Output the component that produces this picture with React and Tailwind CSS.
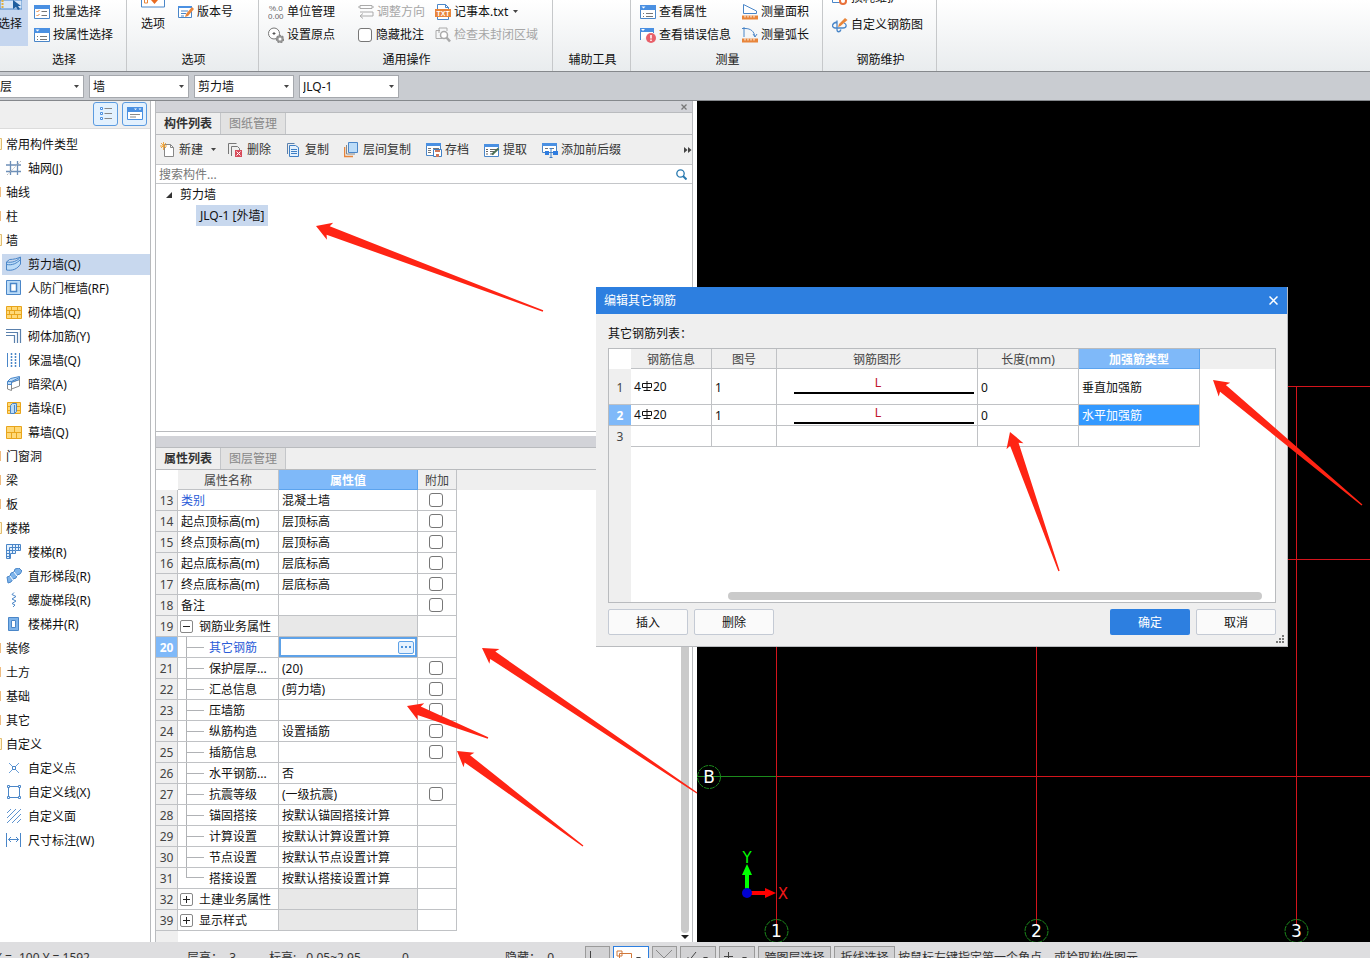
import React from 'react';

// ─── Icons (16x16) ─────────────────────────────────────────────────
const B = '#4a86c8';
const L = '#bcdcf8';
const O = '#e8853a';

const ICONS = {
  batch: (
    <>
      <path d="M.5 1.5h15v13H.5z" fill="#fff" stroke={B} />
      <path d="M0 1h16v4H0z" fill="#4a90e2" />
      <path d="M2.5 7l1 1 2-2M2.5 11l1 1 2-2" fill="none" stroke={O} />
      <path d="M7.5 7.5H13M7.5 11.5H13" stroke="#777" />
    </>
  ),
  props: (
    <>
      <path d="M.5 1.5h15v13H.5z" fill="#fff" stroke={B} />
      <path d="M0 1h16v5H0z" fill="#4a90e2" />
      <path d="M1.500 2.500h4L3.500 4.500z" fill="#fff" />
      <path d="M3 9.500h1M6 9.500h7M3 12.500h1M6 12.500h7" stroke="#777" />
    </>
  ),
  version: (
    <>
      <path d="M.5 2.500h13v11H.5z" fill="#fff" stroke={B} />
      <path d="M0 2h14v2H0z" fill="#4a90e2" />
      <path d="M3 7h7M3 9.500h5M3 12h3" stroke={B} />
      <path d="M7 13l1-3 6-7 2 2-6 7z" fill={O} />
    </>
  ),
  unit: (
    <g fontSize="8" fill="#666" fontFamily="Liberation Sans">
      <text x="1" y="7">%.0</text>
      <text x="0" y="15">0.00</text>
    </g>
  ),
  origin: (
    <>
      <circle cx="6" cy="6.500" r="5.500" fill="#fff" stroke="#777" />
      <path d="M4.500 6.500h3M6 5v3" stroke="#555" />
      <circle cx="12" cy="12" r="3.500" fill="#999" stroke="#888" strokeWidth="1.500" strokeDasharray="2 1" />
      <circle cx="12" cy="12" r="1.500" fill="#fff" />
    </>
  ),
  direction: (
    <path d="M2 1.500h12v3H2zM2 3H0M14 3h2M2 8h13v4H3M5 9.500L2 12l3 2.500" fill="none" stroke="#aaa" />
  ),
  txt: (
    <>
      <path d="M2.500.5h8l3 3v12h-11z" fill="#fff" stroke={B} />
      <path d="M10.500.5v3h3" fill="none" stroke={B} />
      <path d="M0 5h16v8H0z" fill={O} />
      <text x="1.500" y="11.500" fontSize="7" fontWeight="bold" fill="#fff" fontFamily="Liberation Sans">TXT</text>
    </>
  ),
  region: (
    <>
      <path d="M4 3.500V1h8v3M7 11.500H1V3.500h4M4 6V4" fill="none" stroke="#aaa" />
      <circle cx="9" cy="8" r="3.500" fill="#fff" stroke="#aaa" strokeWidth="1.500" />
      <path d="M11.500 10.500l3.500 4" stroke="#aaa" strokeWidth="2.500" />
    </>
  ),
  viewError: (
    <>
      <path d="M.5 13V1.500h13V6" fill="#fff" stroke={B} />
      <path d="M0 1h14v4H0z" fill="#4a90e2" />
      <path d="M1 2h4L3 4z" fill="#fff" />
      <circle cx="11" cy="11" r="5" fill="#e8606a" />
      <path d="M11 8v3.500M11 12.500V14" stroke="#fff" strokeWidth="1.500" />
    </>
  ),
  area: (
    <>
      <path d="M1.500.5v9h13V7z" fill="#fff" stroke={B} />
      <path d="M0 11.500h16v4H0z" fill={O} />
      <path d="M3 11.500v2M6 11.500v2M9 11.500v2M12 11.500v2" stroke="#fff" />
    </>
  ),
  arc: (
    <>
      <path d="M0 1.500h4M2 0v10M3 1.500c6 0 9 3 10 8M11 7l2 3 2-3" fill="none" stroke={B} />
      <path d="M0 11.500h16v4H0z" fill={O} />
      <path d="M3 11.500v2M6 11.500v2M9 11.500v2M12 11.500v2" stroke="#fff" />
    </>
  ),
  custom: (
    <>
      <path d="M5 5c-5 1-6 5-2 6h8c4 0 4-4 1-5M5 3.500v9c0 3 3 3 4 0" fill="none" stroke={B} strokeWidth="1.300" />
      <path d="M6 10l1-3 6-6 2.500 2-7 6z" fill={O} />
    </>
  ),
  loss: (
    <>
      <path d="M.5 1.500h11v11H.5z" fill="#fff" stroke={B} />
      <circle cx="11" cy="11" r="3" fill="#fff" stroke="#e8703a" strokeWidth="2" />
    </>
  ),
  grid: (
    <>
      <path d="M4.500 1v14M11.500 1v14M0 5h15M0 11.500h15" stroke="#6d8fb8" strokeWidth="1.300" />
      <path d="M1 15L15 1" stroke="#bbb" strokeDasharray="2 1" />
    </>
  ),
  shear: (
    <>
      <path d="M.5 6c6 1 11-1 14-5v7c-3 5-8 7-14 6z" fill={L} stroke={B} />
      <path d="M.5 8.500c6 1 10-1 14-5M.5 6l3-2.500c4 0 8-1 11-2.500" fill="none" stroke={B} />
    </>
  ),
  frame: (
    <>
      <path d="M.5.5h14v14H.5z" fill={L} stroke={B} />
      <path d="M4.500 3.500h6v8h-6z" fill="#fff" stroke={B} strokeWidth="1.500" />
    </>
  ),
  brick: (
    <>
      <path d="M.5 2.500h15v12H.5z" fill="#ffd978" stroke="#e8a51c" />
      <path d="M0 6.500h16M0 10.500h16M5.500 2v4M11.500 2v4M3.500 7v3M8.500 7v3M5.500 11v3M11.500 11v3" stroke="#e8a51c" />
    </>
  ),
  rebar: <path d="M0 1.500h14.500V15M0 4.500h11.500V15M0 7.500h8.500V15" fill="none" stroke="#5a80ac" strokeWidth="1.200" />,
  insul: (
    <>
      <path d="M1.500 1v14M13.500 1v14" stroke={B} />
      <path d="M5.500 1v14M9.500 1v14" stroke={B} strokeWidth="1.500" strokeDasharray="2 1" />
    </>
  ),
  beam: (
    <>
      <path d="M1.500 6.500h4v8l-4-1.500zM5.500 6.500l8-3v6.500l-8 3" fill="#fff" stroke="#888" />
      <path d="M1.500 5.500l3-3 9-2v3l-8 2.500v2.500h-4z" fill={L} stroke={B} />
      <path d="M1.500 5.500h4l8-4M5.500 5.500v3" fill="none" stroke={B} />
    </>
  ),
  pier: (
    <>
      <path d="M1.500 2.500h13v11h-13z" fill="#ffd978" stroke="#e8a51c" />
      <path d="M1 6.500h14M1 10.500h14" stroke="#e8a51c" />
      <path d="M4.500 5.500l2-2h4v8l-2 2h-4z" fill={L} stroke={B} />
      <path d="M8.500 5v8" stroke={B} />
    </>
  ),
  curtain: (
    <>
      <path d="M.5 2.500h15v12H.5z" fill="#ffd978" stroke="#e8a51c" />
      <path d="M0 8.500h16M8.500 2v6M5.500 9v5M10.500 9v5" stroke="#e8a51c" />
    </>
  ),
  stair: (
    <>
      <path d="M.5.5h14v6h-5v3h-5v5h-4z" fill="#e4f1fd" stroke={B} />
      <path d="M3.500 3.500h11M3.500 3.500v11M6.500 1v8M9.500 1v5M12.500 1v5M1 6.500h8M1 9.500h3M1 12.500h3" fill="none" stroke={B} />
    </>
  ),
  flight: (
    <>
      <path d="M1 9l3-1 1-3 3-1 1-3 4-1 3 3-2 3-3 1-1 3-3 1-2 3-3 1z" fill="#7db3ea" stroke={B} />
      <path d="M4 8l3 4M8 4l3 4" stroke="#fff" />
    </>
  ),
  spiral: <path d="M8 .5L6 2.500l4 2-4 2.500 4 2-4 2.500 3 1.500-2 2" fill="none" stroke={B} />,
  well: (
    <>
      <path d="M2.500 1.500h10v13h-10z" fill="#7db3ea" stroke={B} />
      <path d="M5.500 4.500h4v7h-4z" fill="#fff" stroke={B} />
    </>
  ),
  point: (
    <>
      <path d="M3 3l10 10M13 3L3 13" stroke="#6a9fd8" />
      <path d="M6.500 6.500h3v3h-3z" fill="#fff" stroke={B} />
    </>
  ),
  line: (
    <>
      <path d="M2.500 2.500h11v11h-11z" fill="none" stroke={B} />
      <path d="M1.500 1.500h2v2h-2zM12.500 1.500h2v2h-2zM1.500 12.500h2v2h-2zM12.500 12.500h2v2h-2z" fill="#fff" stroke={B} />
    </>
  ),
  face: <path d="M1 5l4-4M1 10l9-9M1 15L15 1M6 15l9-9M11 15l4-4" stroke={B} strokeWidth=".9" />,
  dimension: <path d="M.5 1v14M14.500 1v14M2.500 7.500h10M5 5L2.500 7.500 5 10M10 5l2.500 2.500L10 10" fill="none" stroke={B} />,
  create: (
    <>
      <path d="M4.500 2.500h6l3 3v9h-9z" fill="#fff" stroke="#888" />
      <path d="M10.500 2.500v3h3" fill="none" stroke="#888" />
      <path d="M3.500 0v8M0 4h7M1 1l5 5M6 1L1 6" stroke="#f0a030" strokeWidth=".9" />
    </>
  ),
  remove: (
    <>
      <path d="M.5 12V1.500h8M3.500 14V4.500h6l2 2V9" fill="none" stroke="#777" />
      <path d="M7 8h7v7H7z" fill="#d84a5a" />
      <path d="M8.500 9.500l4 4M12.500 9.500l-4 4" stroke="#fff" />
    </>
  ),
  copy: (
    <>
      <path d="M1.500 12V1.500h7" fill="none" stroke="#5a80ac" />
      <path d="M3.500 3.500h6l3 2v9h-9z" fill="#e4f1fd" stroke="#3f7fc4" />
      <path d="M5 7.500h6M5 9.500h6M5 11.500h6" stroke="#3f7fc4" />
    </>
  ),
  layerCopy: (
    <>
      <path d="M.5 5v9.500H9" fill="none" stroke={O} strokeWidth="1.500" />
      <path d="M2.500 3v9H11" fill="none" stroke="#888" />
      <path d="M4.500.5h9v10h-9z" fill={L} stroke={B} />
    </>
  ),
  archive: (
    <>
      <path d="M.5 1.500h14v12H.5z" fill="#fff" stroke={B} />
      <path d="M0 1h15v3H0z" fill="#4a90e2" />
      <path d="M2 6.500h3M7 6.500h6M2 8.500h3M2 10.500h3" stroke="#777" />
      <path d="M7.500 7.500h8v7h-8z" fill="#fff" stroke="#3f7fc4" />
      <path d="M9 8h5v2H9zM10 12h3v3h-3z" fill="#d0785a" />
    </>
  ),
  extract: (
    <>
      <path d="M.5 2.500h14v12H.5z" fill="#fff" stroke={B} />
      <path d="M0 2h15v3H0z" fill="#4a90e2" />
      <path d="M2 7.500h2M6 7.500h7M2 9.500h2M6 9.500h4M2 12h2M6 12h4" stroke="#666" />
      <path d="M8 12.500l6.500-6" stroke="#4b7054" strokeWidth="2" />
    </>
  ),
  affix: (
    <>
      <path d="M.5 1.500h14v9H.5z" fill="#fff" stroke={B} />
      <path d="M0 1h15v3H0z" fill="#4a90e2" />
      <path d="M3 6.500h3M8 6.500h4" stroke="#777" />
      <path d="M3 9h4v4H3zM11 9h5v4h-5z" fill="#2f7de0" />
      <path d="M9 7v8M7.500 15.500h3M7.500 6.500h3" stroke="#3f7fc4" />
    </>
  ),
  list: (
    <>
      <path d="M2.500 1.500h2v2h-2zM2.500 6.500h2v2h-2zM2.500 11.500h2v2h-2z" fill="#fff" stroke="#4a90e2" />
      <path d="M6.500 2.500H14M6.500 7.500H14M6.500 12.500H14" stroke="#888" />
    </>
  ),
  panel: (
    <>
      <path d="M.5 1.500h15v12H.5z" fill="#fff" stroke="#4a90e2" />
      <path d="M0 1h16v5H0z" fill="#4a90e2" />
      <path d="M7 2.500h3L8.500 4zM11.500 2.500h3L13 4z" fill="#fff" />
      <path d="M3 8.500h10M3 11h6" stroke="#888" />
    </>
  ),
};

const Icon = ({ name }) => (
  <svg width="16" height="16" viewBox="0 0 16 16" className="shrink-0" aria-hidden="true">
    {ICONS[name]}
  </svg>
);

const Caret = () => (
  <svg width="5" height="3" viewBox="0 0 5 3" className="shrink-0" aria-hidden="true">
    <path d="M0 0h5L2.500 3z" fill="#444" />
  </svg>
);

// ─── Ribbon ────────────────────────────────────────────────────────
const RibbonItem = ({ icon, label, disabled, caret }) => (
  <button
    type="button"
    disabled={disabled}
    className="flex h-[23px] shrink-0 items-center gap-[3px] whitespace-nowrap disabled:text-[#a6a6a6]"
  >
    <Icon name={icon} />
    {label}
    {caret && (
      <span className="pl-[2px]">
        <Caret />
      </span>
    )}
  </button>
);

const RibbonGroup = ({ title, width, children }) => (
  <section className={`flex h-full shrink-0 flex-col border-r border-[#c6c8ca] ${width}`}>
    <div className="flex h-12 shrink-0 items-start">{children}</div>
    <h2 className="flex h-6 shrink-0 items-center justify-center pl-[2px]">{title}</h2>
  </section>
);

const Ribbon = () => (
  <header className="flex h-[72px] shrink-0 overflow-hidden border-b border-[#85888c] bg-linear-to-b from-white to-[#e9ecee]">
    <RibbonGroup title="选择" width="w-[127px]">
      <button type="button" className="flex h-[46px] w-7 shrink-0 flex-col items-end bg-[#c5d6ef] pr-[6px]">
        <svg width="22" height="16" viewBox="0 0 22 16" className="shrink-0" aria-hidden="true">
          <path d="M0 0h22v9H0z" fill="#d5e5f7" stroke={B} />
          <path d="M2.500 0v9" stroke="#e0b040" strokeWidth="2" strokeDasharray="2 1" />
          <path d="M13 0v9l3-2 2 3 2-1-2-3h3z" fill="#1f5f9f" />
        </svg>
        <span className="whitespace-nowrap">选择</span>
      </button>
      <div className="ml-[6px]">
        <RibbonItem icon="batch" label="批量选择" />
        <RibbonItem icon="props" label="按属性选择" />
      </div>
    </RibbonGroup>

    <RibbonGroup title="选项" width="w-[132px]">
      <button type="button" className="ml-[14px] flex flex-col items-center">
        <svg width="24" height="16" viewBox="0 0 24 16" aria-hidden="true">
          <path d="M.5-4v11h23V-4" fill="#fff" stroke={B} />
          <path d="M3.500 0v3h3V0" fill="none" stroke={O} />
          <path d="M10 0h7l-3.500 4z" fill="#e86a20" />
        </svg>
        选项
      </button>
      <div className="ml-[13px]">
        <RibbonItem icon="version" label="版本号" />
      </div>
    </RibbonGroup>

    <RibbonGroup title="通用操作" width="w-[294px]">
      <div className="ml-[9px]">
        <RibbonItem icon="unit" label="单位管理" />
        <RibbonItem icon="origin" label="设置原点" />
      </div>
      <div className="ml-[23px]">
        <RibbonItem icon="direction" label="调整方向" disabled />
        <label className="flex h-[23px] items-center gap-1">
          <input type="checkbox" className="size-[14px] appearance-none rounded-[3px] border border-[#777] bg-white" />
          隐藏批注
        </label>
      </div>
      <div className="ml-[10px]">
        <RibbonItem icon="txt" label="记事本.txt" caret />
        <RibbonItem icon="region" label="检查未封闭区域" disabled />
      </div>
    </RibbonGroup>

    <RibbonGroup title="辅助工具" width="w-[78px]" />

    <RibbonGroup title="测量" width="w-[192px]">
      <div className="ml-[9px]">
        <RibbonItem icon="props" label="查看属性" />
        <RibbonItem icon="viewError" label="查看错误信息" />
      </div>
      <div className="ml-[11px]">
        <RibbonItem icon="area" label="测量面积" />
        <RibbonItem icon="arc" label="测量弧长" />
      </div>
    </RibbonGroup>

    <RibbonGroup title="钢筋维护" width="w-[114px]">
      <div className="ml-[9px] flex h-9 flex-col justify-end gap-1">
        <RibbonItem icon="loss" label="损耗维护" />
        <RibbonItem icon="custom" label="自定义钢筋图" />
      </div>
    </RibbonGroup>
  </header>
);

// ─── Selector bar ──────────────────────────────────────────────────
const SELECTS = [
  { label: '楼层', value: '首层' },
  { label: '构件分类', value: '墙' },
  { label: '构件类型', value: '剪力墙' },
  { label: '构件', value: 'JLQ-1' },
];

const SelectorBar = () => (
  <div className="flex h-[29px] shrink-0 items-center overflow-hidden border-b border-[#85888c] bg-[#c9ccd1]">
    <div className="-ml-4 flex gap-[5px]">
      {SELECTS.map((s) => (
        <div key={s.label} className="relative">
          <select aria-label={s.label} className="h-[23px] w-[100px] appearance-none border border-[#a5a8ad] bg-white px-[3px] pt-px">
            <option>{s.value}</option>
          </select>
          <span className="pointer-events-none absolute inset-y-0 right-[5px] flex items-center">
            <Caret />
          </span>
        </div>
      ))}
    </div>
  </div>
);

// ─── Sidebar ───────────────────────────────────────────────────────
const NAV = [
  { label: '常用构件类型', open: true, items: [['grid', '轴网(J)']] },
  { label: '轴线' },
  { label: '柱' },
  {
    label: '墙',
    open: true,
    items: [
      ['shear', '剪力墙(Q)'],
      ['frame', '人防门框墙(RF)'],
      ['brick', '砌体墙(Q)'],
      ['rebar', '砌体加筋(Y)'],
      ['insul', '保温墙(Q)'],
      ['beam', '暗梁(A)'],
      ['pier', '墙垛(E)'],
      ['curtain', '幕墙(Q)'],
    ],
  },
  { label: '门窗洞' },
  { label: '梁' },
  { label: '板' },
  {
    label: '楼梯',
    open: true,
    items: [
      ['stair', '楼梯(R)'],
      ['flight', '直形梯段(R)'],
      ['spiral', '螺旋梯段(R)'],
      ['well', '楼梯井(R)'],
    ],
  },
  { label: '装修' },
  { label: '土方' },
  { label: '基础' },
  { label: '其它' },
  {
    label: '自定义',
    open: true,
    items: [
      ['point', '自定义点'],
      ['line', '自定义线(X)'],
      ['face', '自定义面'],
      ['dimension', '尺寸标注(W)'],
    ],
  },
];

const Sidebar = () => (
  <nav className="flex w-[151px] shrink-0 flex-col border-r border-[#b8babd] bg-white">
    <div className="flex h-7 shrink-0 items-start justify-end gap-1 border-b border-[#dcdcdc] bg-[#efefef] pt-px pr-[3px]">
      {['list', 'panel'].map((name) => (
        <button
          key={name}
          type="button"
          aria-label={name}
          className="flex h-6 w-[25px] items-center justify-center rounded-[3px] border border-[#5b9be0] bg-[#e3f1fe]"
        >
          <Icon name={name} />
        </button>
      ))}
    </div>
    <ul className="pt-[3px]">
      {NAV.map((group) => (
        <li key={group.label}>
          <button type="button" className="flex h-6 w-full items-center">
            <svg width="6" height="12" viewBox="0 0 6 12" className="shrink-0" aria-hidden="true">
              {group.open ? (
                <path d="M0 .5h1.500v11H0" fill="#fff3d0" stroke="#e0bc70" />
              ) : (
                <path d="M0 1h1v10H0z" fill="#eebb80" />
              )}
            </svg>
            <span className="pt-[2px]">{group.label}</span>
          </button>
          {group.items && (
            <ul>
              {group.items.map(([icon, label]) => (
                <li key={label} className="flex h-6 items-center pl-[2px]">
                  <button
                    type="button"
                    className={`flex h-[21px] w-full items-center gap-[6px] pl-1 ${label === '剪力墙(Q)' ? 'bg-[#c8d8ee]' : ''}`}
                  >
                    <Icon name={icon} />
                    <span className="pt-[2px]">{label}</span>
                  </button>
                </li>
              ))}
            </ul>
          )}
        </li>
      ))}
    </ul>
  </nav>
);

// ─── Dock panels ───────────────────────────────────────────────────
const DockTabs = ({ tabs }) => (
  <div className="flex h-[22px] shrink-0 border-b border-[#b9bbbe] bg-[#efefef]">
    {tabs.map((tab, i) => (
      <button
        key={tab}
        type="button"
        className={`w-[65px] border-r border-[#c4c6c9] ${i === 0 ? 'font-bold text-[#333]' : 'bg-[#e2e2e2] text-[#888]'}`}
      >
        {tab}
      </button>
    ))}
  </div>
);

const TOOLS = [
  ['remove', '删除'],
  ['copy', '复制'],
  ['layerCopy', '层间复制'],
  ['archive', '存档'],
  ['extract', '提取'],
  ['affix', '添加前后缀'],
];

const ComponentPanel = () => (
  <section className="flex shrink-0 flex-col">
    <div className="flex h-3 items-center justify-end border-b border-[#b9bbbe] bg-[#d2d3d8] pr-[5px]">
      <button type="button" aria-label="关闭">
        <svg width="6" height="6" viewBox="0 0 6 6">
          <path d="M.5.5l5 5M5.500.5l-5 5" stroke="#777" strokeWidth="1.300" />
        </svg>
      </button>
    </div>
    <DockTabs tabs={['构件列表', '图纸管理']} />
    <div className="flex h-[30px] items-center border-b border-[#c4c6c9] bg-[#efefef] pl-1 text-[#333]">
      <button type="button" className="flex items-center gap-[3px]">
        <Icon name="create" />
        新建
        <span className="pl-[5px]">
          <Caret />
        </span>
      </button>
      <div className="ml-3 flex gap-[15px]">
        {TOOLS.map(([icon, label]) => (
          <button key={label} type="button" className="flex items-center gap-[3px]">
            <Icon name={icon} />
            {label}
          </button>
        ))}
      </div>
      <button type="button" aria-label="更多" className="ml-auto">
        <svg width="8" height="6" viewBox="0 0 8 6">
          <path d="M0 0l3.500 3L0 6zM4 0l3.500 3L4 6z" fill="#444" />
        </svg>
      </button>
    </div>
    <div className="flex h-[19px] items-center border-b border-[#c4c6c9] bg-white pr-[5px] pl-[3px]">
      <input type="text" aria-label="搜索构件" placeholder="搜索构件..." className="min-w-0 flex-1 pt-[2px] outline-none placeholder:text-[#777]" />
      <svg width="11" height="11" viewBox="0 0 11 11" aria-hidden="true">
        <circle cx="4.500" cy="4.500" r="3.700" fill="none" stroke="#2a7ab0" strokeWidth="1.300" />
        <path d="M7 7l3.500 3.500" stroke="#2a7ab0" strokeWidth="2" />
      </svg>
    </div>
    <div className="h-[248px] border-b border-[#b9bbbe] bg-white">
      <div className="flex h-[21px] items-center gap-2 pl-[10px]">
        <svg width="6" height="6" viewBox="0 0 6 6" aria-hidden="true">
          <path d="M6 0v6H0z" fill="#333" />
        </svg>
        剪力墙
      </div>
      <button type="button" className="ml-10 flex h-[21px] items-center bg-[#c8d8ee] px-1">
        JLQ-1 [外墙]
      </button>
    </div>
  </section>
);

// kind: 'group' = section row with a toggle, 'child' = row hanging on the tree line
const ROWS = [
  { no: 13, name: '类别', value: '混凝土墙', check: true, blue: true },
  { no: 14, name: '起点顶标高(m)', value: '层顶标高', check: true },
  { no: 15, name: '终点顶标高(m)', value: '层顶标高', check: true },
  { no: 16, name: '起点底标高(m)', value: '层底标高', check: true },
  { no: 17, name: '终点底标高(m)', value: '层底标高', check: true },
  { no: 18, name: '备注', value: '', check: true },
  { no: 19, name: '钢筋业务属性', kind: 'group', open: true },
  { no: 20, name: '其它钢筋', kind: 'child', blue: true, active: true },
  { no: 21, name: '保护层厚...', value: '(20)', kind: 'child', check: true },
  { no: 22, name: '汇总信息', value: '(剪力墙)', kind: 'child', check: true },
  { no: 23, name: '压墙筋', value: '', kind: 'child', check: true },
  { no: 24, name: '纵筋构造', value: '设置插筋', kind: 'child', check: true },
  { no: 25, name: '插筋信息', value: '', kind: 'child', check: true },
  { no: 26, name: '水平钢筋...', value: '否', kind: 'child' },
  { no: 27, name: '抗震等级', value: '(一级抗震)', kind: 'child', check: true },
  { no: 28, name: '锚固搭接', value: '按默认锚固搭接计算', kind: 'child' },
  { no: 29, name: '计算设置', value: '按默认计算设置计算', kind: 'child' },
  { no: 30, name: '节点设置', value: '按默认节点设置计算', kind: 'child' },
  { no: 31, name: '搭接设置', value: '按默认搭接设置计算', kind: 'child', last: true },
  { no: 32, name: '土建业务属性', kind: 'group' },
  { no: 39, name: '显示样式', kind: 'group' },
];

const NameCell = ({ row }) => {
  if (row.kind === 'group') {
    return (
      <div className="flex items-center gap-[6px] pl-[2px]">
        <button
          type="button"
          aria-label={row.open ? '折叠' : '展开'}
          className="flex size-[13px] items-center justify-center rounded-[2px] border border-[#888] bg-white"
        >
          <svg width="7" height="7" viewBox="0 0 7 7">
            <path d={row.open ? 'M0 3.500h7' : 'M0 3.500h7M3.500 0v7'} stroke="#222" />
          </svg>
        </button>
        <span className="pt-[2px]">{row.name}</span>
      </div>
    );
  }
  if (row.kind === 'child') {
    return (
      <div className="flex h-5 items-center pl-2">
        <span
          className={
            row.last
              ? 'h-[10px] w-[18px] self-start border-b border-l border-[#b0b2b5]'
              : 'flex h-5 w-[18px] items-center border-l border-[#b0b2b5]'
          }
        >
          {!row.last && <span className="h-px w-full bg-[#b0b2b5]" />}
        </span>
        <span className="pt-[2px] pl-[5px]">{row.name}</span>
      </div>
    );
  }
  return <div className="pt-[2px] pl-[3px]">{row.name}</div>;
};

const PropertyPanel = () => (
  <section className="flex min-h-0 flex-1 flex-col">
    <div className="h-3 shrink-0 border-b border-[#b9bbbe] bg-[#d2d3d8]" />
    <DockTabs tabs={['属性列表', '图层管理']} />
    <div className="flex min-h-0 flex-1 bg-white">
      <div className="flex shrink-0 flex-col">
        <table className="w-[301px] table-fixed border-separate border-spacing-0">
          <colgroup>
            <col className="w-[22px]" />
            <col className="w-[101px]" />
            <col className="w-[139px]" />
            <col className="w-[39px]" />
          </colgroup>
          <thead>
            <tr className="h-5 text-[#444]">
              <td className="bg-white" />
              <th className="border-r border-b border-[#c0c2c5] bg-[#efefef] p-0 pt-[2px] font-normal">属性名称</th>
              <th className="border-r border-b border-[#5ba3ee] bg-[#7fb9f9] p-0 pt-[2px] font-bold text-white">属性值</th>
              <th className="border-r border-b border-[#c0c2c5] bg-[#efefef] p-0 pt-[2px] font-normal">附加</th>
            </tr>
          </thead>
          <tbody>
            {ROWS.map((row) => (
              <tr key={row.no} className="h-[21px]">
                <th
                  className={`border-r border-b border-[#c0c2c5] p-0 pt-[2px] ${
                    row.active ? 'bg-[#7fb9f9] font-bold text-white' : 'bg-[#efefef] font-normal text-[#444]'
                  }`}
                >
                  {row.no}
                </th>
                <td className={`border-r border-b border-[#c0c2c5] p-0 whitespace-nowrap ${row.blue ? 'text-[#2a5bd8]' : ''}`}>
                  <NameCell row={row} />
                </td>
                <td
                  className={`border-r border-b border-[#c0c2c5] p-0 whitespace-nowrap ${row.kind === 'group' ? 'bg-[#e8e8e8]' : ''}`}
                >
                  {row.active ? (
                    <div className="flex h-5 items-center border-2 border-[#5ea2e8] pr-px">
                      <input type="text" aria-label={row.name} className="h-4 min-w-0 flex-1 outline-none" />
                      <button
                        type="button"
                        aria-label="编辑"
                        className="flex h-[13px] w-4 items-center justify-center rounded-[2px] border border-[#5ea2e8] bg-[#e6f2fe]"
                      >
                        <svg width="10" height="2" viewBox="0 0 10 2">
                          <path d="M0 0h2v2H0zM4 0h2v2H4zM8 0h2v2H8z" fill="#4a90d8" />
                        </svg>
                      </button>
                    </div>
                  ) : (
                    <div className="pt-[2px] pl-[3px]">{row.value}</div>
                  )}
                </td>
                <td className="border-r border-b border-[#c0c2c5] p-0 pr-[2px]">
                  {row.check && (
                    <input
                      type="checkbox"
                      aria-label={`附加 ${row.name}`}
                      className="mx-auto block size-[14px] appearance-none rounded-[3px] border border-[#777] bg-white"
                    />
                  )}
                </td>
              </tr>
            ))}
          </tbody>
        </table>
        <div className="w-[22px] flex-1 bg-[#efefef]" />
      </div>
      <div className="flex flex-1 flex-col">
        <div className="h-5 shrink-0 bg-[#efefef]" />
        <div className="mr-[3px] flex flex-1 flex-col items-end">
          <div className="w-2 flex-1 rounded-b bg-[#cacaca]" />
          <svg width="8" height="9" viewBox="0 0 8 9" aria-hidden="true">
            <path d="M0 2h8L4 6z" fill="#222" />
          </svg>
        </div>
      </div>
    </div>
  </section>
);

// ─── Drawing canvas ────────────────────────────────────────────────
const AxisBubble = ({ x, y, label }) => (
  <g>
    <circle cx={x} cy={y} r="11.500" fill="none" stroke="#1c8a1c" strokeDasharray="5 1" />
    <text x={x} y={y + 6} textAnchor="middle" fontSize="17" fill="#fff">
      {label}
    </text>
  </g>
);

const Canvas = () => (
  <div className="min-w-0 flex-1 overflow-hidden bg-black">
    <svg className="block h-full w-full" fontFamily="DejaVu Sans">
      <g stroke="#d4141c">
        <path d="M79.500 285v538M339.500 285v538M599.500 285v538" />
        <path d="M79 285.500h2000M79 458.500h2000M79 675.500h2000" />
      </g>
      <path d="M0 675.500h79" stroke="#1c8a1c" />
      <AxisBubble x={12} y={676} label="B" />
      <AxisBubble x={79.5} y={830} label="1" />
      <AxisBubble x={339.5} y={830} label="2" />
      <AxisBubble x={599.5} y={830} label="3" />
      <path d="M50 792V772" stroke="#00ff00" strokeWidth="4" />
      <path d="M45 774l5-11 5 11z" fill="#00ff00" />
      <path d="M50 792h18" stroke="#f00" strokeWidth="4" />
      <path d="M68 787l11 5-11 5z" fill="#f00" />
      <circle cx="50" cy="792" r="5" fill="#0000d0" />
      <text x="50" y="762" textAnchor="middle" fontSize="15" fill="#00ff00">Y</text>
      <text x="86" y="798" textAnchor="middle" fontSize="15" fill="#f01818">X</text>
    </svg>
  </div>
);

// ─── Dialog ────────────────────────────────────────────────────────
const REBARS = [
  { no: 1, type: '垂直加强筋', tall: true },
  { no: 2, type: '水平加强筋', active: true },
];

const HEADS = ['钢筋信息', '图号', '钢筋图形', '长度(mm)'];

const RebarDialog = () => (
  <div
    role="dialog"
    aria-label="编辑其它钢筋"
    className="absolute top-[186px] left-[596px] w-[692px] border-r border-b border-[#b9bbbe] bg-[#efefef]"
  >
    <div className="flex h-[27px] items-center justify-between bg-[#2d7fe0] pr-[9px] pl-2 text-white">
      <span>编辑其它钢筋</span>
      <button type="button" aria-label="关闭">
        <svg width="9" height="9" viewBox="0 0 9 9">
          <path d="M.5.5l8 8M8.500.5l-8 8" stroke="#fff" strokeWidth="1.500" />
        </svg>
      </button>
    </div>
    <div className="relative pr-[11px] pb-[11px] pl-3">
      <p className="flex h-[34px] items-end pb-[6px]">其它钢筋列表：</p>
      <div className="flex h-[255px] flex-col border border-[#b9bbbe] bg-white">
        <div className="flex min-h-0 flex-1">
          <div className="flex flex-col">
            <table className="w-[591px] table-fixed border-separate border-spacing-0">
              <colgroup>
                <col className="w-[22px]" />
                <col className="w-[81px]" />
                <col className="w-[65px]" />
                <col className="w-[201px]" />
                <col className="w-[101px]" />
                <col className="w-[121px]" />
              </colgroup>
              <thead>
                <tr className="h-5 text-[#444]">
                  <td className="bg-white" />
                  {HEADS.map((head) => (
                    <th key={head} className="border-r border-b border-[#c0c2c5] bg-[#efefef] p-0 pt-[2px] font-normal">
                      {head}
                    </th>
                  ))}
                  <th className="border-r border-b border-[#5ba3ee] bg-[#7fb9f9] p-0 pt-[2px] font-bold text-white">加强筋类型</th>
                </tr>
              </thead>
              <tbody>
                {REBARS.map((r) => (
                  <tr key={r.no} className={r.tall ? 'h-9' : 'h-[21px]'}>
                    <th
                      className={`border-b border-[#c0c2c5] p-0 pt-[2px] ${
                        r.active ? 'bg-[#7fb9f9] font-bold text-white' : 'bg-[#efefef] font-normal text-[#444]'
                      }`}
                    >
                      {r.no}
                    </th>
                    <td className="border-r border-b border-[#c0c2c5] p-0">
                      <span className="flex items-center pl-[3px]">
                        4
                        <svg width="12" height="16" viewBox="0 0 12 16" aria-label="HRB400">
                          <path d="M6 2v10M1.500 4.500h9v4h-9zM2.500 11.500h7" fill="none" stroke="#111" />
                        </svg>
                        20
                      </span>
                    </td>
                    <td className="border-r border-b border-[#c0c2c5] p-0 pt-[2px] pl-[3px]">1</td>
                    <td className={`border-r border-b border-[#c0c2c5] p-0 pr-[3px] pl-[17px] ${r.tall ? 'pb-1' : ''}`}>
                      <div className="h-[18px] border-b-2 border-black pr-3 text-center font-['Liberation_Mono',monospace] text-[#c0142c]">
                        L
                      </div>
                    </td>
                    <td className="border-r border-b border-[#c0c2c5] p-0 pt-[2px] pl-[3px]">0</td>
                    <td
                      className={`border-r border-b border-[#c0c2c5] p-0 pt-[2px] pl-[3px] ${r.active ? 'bg-[#3399ff] text-white' : ''}`}
                    >
                      {r.type}
                    </td>
                  </tr>
                ))}
                <tr className="h-[21px]">
                  <th className="bg-[#efefef] p-0 font-normal text-[#444]">3</th>
                  <td className="border-r border-b border-[#c0c2c5]" />
                  <td className="border-r border-b border-[#c0c2c5]" />
                  <td className="border-r border-b border-[#c0c2c5]" />
                  <td className="border-r border-b border-[#c0c2c5]" />
                  <td className="border-r border-b border-[#c0c2c5]" />
                </tr>
              </tbody>
            </table>
            <div className="w-[22px] flex-1 bg-[#efefef]" />
          </div>
          <div className="h-5 flex-1 bg-[#efefef]" />
        </div>
        <div className="flex h-[14px] shrink-0">
          <div className="h-full w-[22px] bg-[#efefef]" />
          <div className="mt-1 mr-[13px] ml-[97px] h-2 flex-1 rounded-full bg-[#cacaca]" />
        </div>
      </div>
      <div className="flex gap-[6px] pt-[6px]">
        <button type="button" className="h-[26px] w-20 rounded-[2px] border border-[#c4cad4] bg-[#fafafa] pt-[2px]">插入</button>
        <button type="button" className="h-[26px] w-20 rounded-[2px] border border-[#c4cad4] bg-[#fafafa] pt-[2px]">删除</button>
        <button type="button" className="ml-auto h-[26px] w-20 rounded-[2px] bg-[#2d7fe0] pt-[2px] text-white">确定</button>
        <button type="button" className="h-[26px] w-20 rounded-[2px] border border-[#c4cad4] bg-[#fafafa] pt-[2px]">取消</button>
      </div>
      <svg width="8" height="8" viewBox="0 0 8 8" className="absolute right-[3px] bottom-[3px]" aria-hidden="true">
        <path d="M6 0h2v2H6zM3 3h2v2H3zM6 3h2v2H6zM0 6h2v2H0zM3 6h2v2H3zM6 6h2v2H6z" fill="#777" />
      </svg>
    </div>
  </div>
);

// ─── Annotation arrows ─────────────────────────────────────────────
const ARROWS = [
  [316, 226, 543, 311],
  [482, 648, 697, 793],
  [407, 706, 488, 738],
  [457, 751, 583, 846],
  [1010, 432, 1059, 571],
  [1213, 380, 1362, 505],
];

const Arrows = () => (
  <svg className="pointer-events-none absolute inset-0 h-full w-full" aria-hidden="true">
    {ARROWS.map(([x, y, tx, ty]) => {
      const len = Math.hypot(tx - x, ty - y);
      const angle = (Math.atan2(ty - y, tx - x) * 180) / Math.PI;
      return (
        <polygon
          key={`${x}-${y}`}
          points={`0,0 15,-9 13,-4.5 ${len},-0.7 ${len},0.7 13,4.5 15,9`}
          transform={`translate(${x} ${y}) rotate(${angle})`}
          fill="#ff2414"
        />
      );
    })}
  </svg>
);

// ─── Status bar ────────────────────────────────────────────────────
const SNAPS = [
  { label: '正交', width: 'w-[25px]', path: 'M4.500 4v14M4 17.500h14', color: '#444' },
  { label: '矩形捕捉', width: 'w-[36px]', path: 'M5.500 6.500h12v12h-12zM3 4h5v5H3z', color: '#d0783a', active: true, caret: true },
  { label: '交点', width: 'w-[25px]', path: 'M3 3l8 8 8-8M11 11v8', color: '#888' },
  { label: '垂足', width: 'w-[36px]', path: 'M15 5L7 15M7 10v5h5', color: '#444', caret: true },
  { label: '偏移', width: 'w-[36px]', path: 'M8.500 5v9M4 9.500h9', color: '#444', caret: true },
];

const StatusBar = () => (
  <footer className="h-4 shrink-0 overflow-hidden bg-[#dedee0] text-[#333]">
    <div className="flex h-7 items-center whitespace-nowrap pt-1">
      <span className="flex w-[90px] shrink-0 justify-end">X = -100 Y = 1592</span>
      <span className="ml-[97px] w-[82px] shrink-0">层高：&nbsp; 3</span>
      <span className="w-[133px] shrink-0">标高:&nbsp; -0.05~2.95</span>
      <span className="w-[103px] shrink-0">0</span>
      <span className="w-20 shrink-0">隐藏：&nbsp; 0</span>
      <div className="flex gap-[3px]">
        {SNAPS.map((s) => (
          <button
            key={s.label}
            type="button"
            aria-label={s.label}
            className={`flex h-6 shrink-0 items-center border ${s.width} ${
              s.active ? 'border-[#2d7fe0] bg-white' : 'border-[#9a9a9a] bg-[#d2d2d4]'
            }`}
          >
            <svg width="22" height="22" viewBox="0 0 22 22">
              <path d={s.path} fill="none" stroke={s.color} />
            </svg>
            {s.caret && <Caret />}
          </button>
        ))}
        <button type="button" className="h-6 w-[73px] border border-[#9a9a9a] bg-[#d2d2d4]">跨图层选择</button>
        <button type="button" className="h-6 w-[61px] border border-[#9a9a9a] bg-[#d2d2d4]">折线选择</button>
        <span className="flex items-center">按鼠标左键指定第一个角点，或拾取构件图元</span>
      </div>
    </div>
  </footer>
);

const App = () => (
  <div className="relative flex h-screen flex-col overflow-hidden bg-white font-['Noto_Sans','Noto_Sans_CJK_SC',sans-serif] text-[12px] leading-4 text-[#111]">
    <Ribbon />
    <SelectorBar />
    <main className="relative flex min-h-0 flex-1">
      <Sidebar />
      <div className="ml-1 flex w-[538px] shrink-0 flex-col gap-1 border-x border-[#b9bbbe]">
        <ComponentPanel />
        <PropertyPanel />
      </div>
      <div className="w-1 shrink-0 bg-white" />
      <Canvas />
      <RebarDialog />
    </main>
    <StatusBar />
    <Arrows />
  </div>
);

export default App;
